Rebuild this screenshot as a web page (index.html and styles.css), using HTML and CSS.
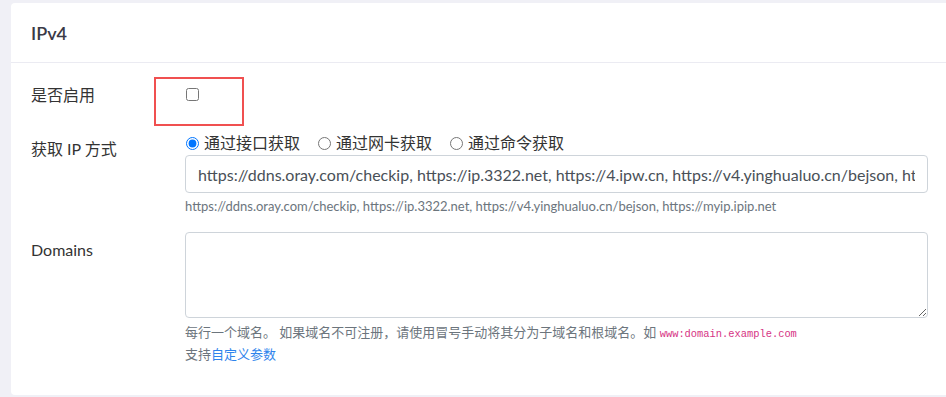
FILE: index.html
```html
<!DOCTYPE html>
<html lang="zh-CN">
<head>
<meta charset="utf-8">
<title>IPv4</title>
<link rel="stylesheet" href="styles.css">
</head>
<body>
<div class="page">
  <div class="card">
    <div class="card-header">IPv4</div>
    <div class="card-body">
      <div class="row">
        <label class="col-label">是否启用</label>
        <div class="control check-cell">
          <input type="checkbox" class="check">
          <span class="mark-box"></span>
        </div>
      </div>
      <div class="row">
        <label class="col-label">获取 IP 方式</label>
        <div class="control">
          <div class="radios">
            <label class="radio-item"><input type="radio" name="m" checked><span>通过接口获取</span></label>
            <label class="radio-item"><input type="radio" name="m"><span>通过网卡获取</span></label>
            <label class="radio-item"><input type="radio" name="m"><span>通过命令获取</span></label>
          </div>
          <input class="text-input" type="text" value="https://ddns.oray.com/checkip, https://ip.3322.net, https://4.ipw.cn, https://v4.yinghualuo.cn/bejson, https://myip.ipip.net">
          <div class="help">https://ddns.oray.com/checkip, https://ip.3322.net, https://v4.yinghualuo.cn/bejson, https://myip.ipip.net</div>
        </div>
      </div>
      <div class="row">
        <label class="col-label">Domains</label>
        <div class="control">
          <textarea class="text-area"></textarea>
          <div class="help help-lines">每行一个域名。 如果域名不可注册，请使用冒号手动将其分为子域名和根域名。如 <code>www:domain.example.com</code><br>支持<a href="#" class="link">自定义参数</a></div>
        </div>
      </div>
    </div>
  </div>
</div>
</body>
</html>
```
FILE: styles.css
```css
html, body {
  margin: 0;
  padding: 0;
  overflow: hidden;
  background: #f0f0f6;
}
body {
  font-family: "Lato", "Noto Sans CJK SC", sans-serif;
  color: #333;
  font-size: 16px;
}
.page {
  padding: 3px 0 2px 11px;
  height: 392px;
}
.card {
  background: #fff;
  border-radius: 4px 0 0 4px;
  height: 392px;
  margin-right: -20px;
}
.card-header {
  height: 59px;
  padding: 0 20px;
  display: flex;
  align-items: center;
  border-bottom: 1px solid #ebebf2;
  font-size: 18px;
  font-weight: 600;
  color: #3a3a46;
}
.card-body {
  padding: 14px 20px 0 20px;
}
.row {
  display: grid;
  grid-template-columns: 154px 743px;
  margin-bottom: 16px;
}
.col-label {
  padding-top: 6px;
  line-height: 24px;
  min-height: 32px;
}
.control {
  position: relative;
}
.check-cell {
  height: 38px;
}
.check {
  margin: 11px 0 0 1px;
  width: 13px;
  height: 13px;
}
.mark-box {
  position: absolute;
  left: -31px;
  top: 0;
  width: 90px;
  height: 49px;
  box-sizing: border-box;
  border: 2px solid #f05050;
}
.radios {
  display: flex;
  height: 24px;
  align-items: center;
  gap: 17px;
}
.radio-item {
  display: flex;
  align-items: center;
  gap: 5px;
  line-height: 24px;
}
.radio-item input {
  margin: 0 0 0 1px;
  width: 13px;
  height: 13px;
}
.text-input {
  display: block;
  box-sizing: border-box;
  width: 100%;
  height: 38px;
  padding: 6px 12px;
  border: 1px solid #ced4da;
  border-radius: 4px;
  font-family: inherit;
  font-size: 16px;
  color: #495057;
  background: #fff;
}
.text-area {
  display: block;
  box-sizing: border-box;
  width: 100%;
  height: 86px;
  padding: 6px 12px;
  border: 1px solid #ced4da;
  border-radius: 4px;
  font-family: inherit;
  font-size: 16px;
  resize: vertical;
}
.help {
  margin-top: 4px;
  font-size: 13px;
  line-height: 19px;
  color: #6c757d;
}
.help-lines {
  line-height: 20px;
}
code {
  font-family: "Liberation Mono", monospace;
  font-size: 10.4px;
  color: #d63384;
}
.link {
  color: #2f84ec;
  text-decoration: none;
}
```
